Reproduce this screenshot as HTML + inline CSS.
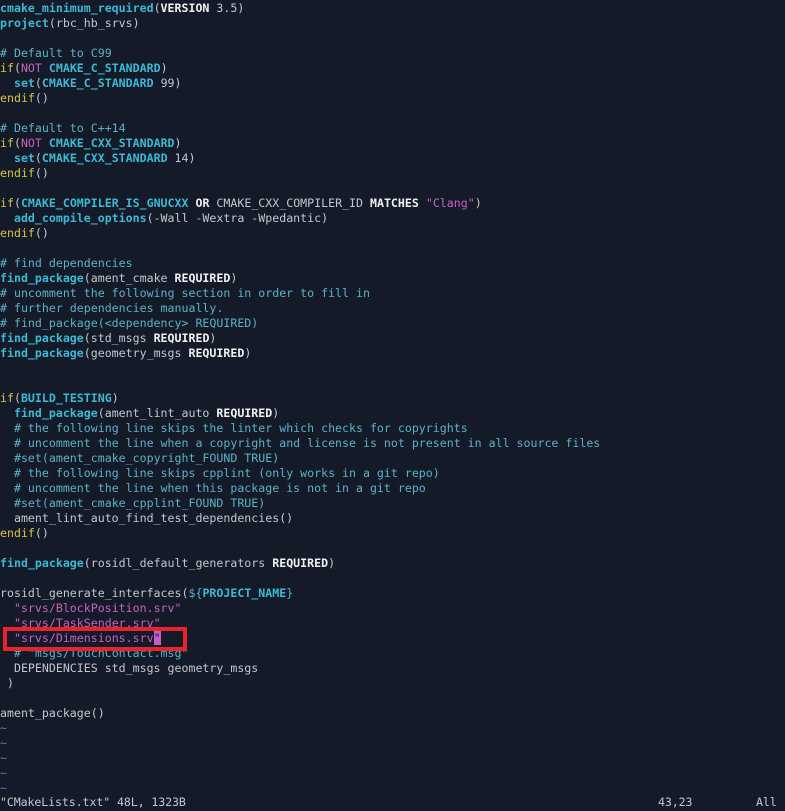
<!DOCTYPE html>
<html><head><meta charset="utf-8"><style>
html,body{margin:0;padding:0;background:#141a27;}
body{width:785px;height:811px;overflow:hidden;position:relative;}
pre{margin:0;font-family:"DejaVu Sans Mono","Liberation Mono",monospace;font-size:11.6px;line-height:15px;color:#c3c7cf;white-space:pre;position:absolute;left:0;top:0.5px;}
.k{color:#3bbad6;font-weight:bold}
.c{color:#5ab3c8}
.s{color:#c463c4}
.y{color:#d4c648}
.b{color:#f2f2f2;font-weight:bold}
.m{color:#c463c4}
.t{color:#4a7fd0}
.cur{background:#c25fc8;color:#141a27}
#box{position:absolute;left:3px;top:627px;width:176px;height:16px;border:4px solid #e8232b;}
#status{position:absolute;top:795px;left:0;width:785px;height:15px;font-family:"DejaVu Sans Mono","Liberation Mono",monospace;font-size:11.6px;line-height:15px;color:#c3c7cf;letter-spacing:-0.1px;}
</style></head><body>
<pre><span class="k">cmake_minimum_required</span>(<span class="b">VERSION</span> 3.5)
<span class="k">project</span>(rbc_hb_srvs)

<span class="c"># Default to C99</span>
<span class="y">if</span>(<span class="m">NOT</span> <span class="k">CMAKE_C_STANDARD</span>)
  <span class="k">set</span>(<span class="k">CMAKE_C_STANDARD</span> 99)
<span class="y">endif</span>()

<span class="c"># Default to C++14</span>
<span class="y">if</span>(<span class="m">NOT</span> <span class="k">CMAKE_CXX_STANDARD</span>)
  <span class="k">set</span>(<span class="k">CMAKE_CXX_STANDARD</span> 14)
<span class="y">endif</span>()

<span class="y">if</span>(<span class="k">CMAKE_COMPILER_IS_GNUCXX</span> <span class="b">OR</span> CMAKE_CXX_COMPILER_ID <span class="b">MATCHES</span> <span class="s">"Clang"</span>)
  <span class="k">add_compile_options</span>(-Wall -Wextra -Wpedantic)
<span class="y">endif</span>()

<span class="c"># find dependencies</span>
<span class="k">find_package</span>(ament_cmake <span class="b">REQUIRED</span>)
<span class="c"># uncomment the following section in order to fill in</span>
<span class="c"># further dependencies manually.</span>
<span class="c"># find_package(&lt;dependency&gt; REQUIRED)</span>
<span class="k">find_package</span>(std_msgs <span class="b">REQUIRED</span>)
<span class="k">find_package</span>(geometry_msgs <span class="b">REQUIRED</span>)


<span class="y">if</span>(<span class="k">BUILD_TESTING</span>)
  <span class="k">find_package</span>(ament_lint_auto <span class="b">REQUIRED</span>)
  <span class="c"># the following line skips the linter which checks for copyrights</span>
  <span class="c"># uncomment the line when a copyright and license is not present in all source files</span>
  <span class="c">#set(ament_cmake_copyright_FOUND TRUE)</span>
  <span class="c"># the following line skips cpplint (only works in a git repo)</span>
  <span class="c"># uncomment the line when this package is not in a git repo</span>
  <span class="c">#set(ament_cmake_cpplint_FOUND TRUE)</span>
  ament_lint_auto_find_test_dependencies()
<span class="y">endif</span>()

<span class="k">find_package</span>(rosidl_default_generators <span class="b">REQUIRED</span>)

rosidl_generate_interfaces(<span class="c">${</span><span class="k">PROJECT_NAME</span><span class="c">}</span>
  <span class="s">"srvs/BlockPosition.srv"</span>
  <span class="s">"srvs/TaskSender.srv"</span>
  <span class="s">"srvs/Dimensions.srv</span><span class="cur">"</span>
  <span class="c"># "msgs/TouchContact.msg"</span>
  DEPENDENCIES std_msgs geometry_msgs
 )

ament_package()
<span class="t">~</span>
<span class="t">~</span>
<span class="t">~</span>
<span class="t">~</span>
<span class="t">~</span></pre>
<div id="box"></div>
<div id="status"><span style="position:absolute;left:0">"CMakeLists.txt" 48L, 1323B</span><span style="position:absolute;left:658px">43,23</span><span style="position:absolute;left:756px">All</span></div>
</body></html>
